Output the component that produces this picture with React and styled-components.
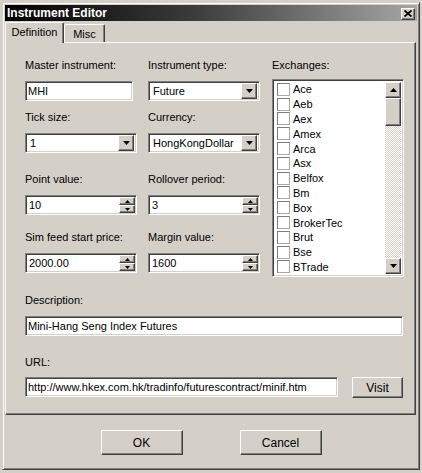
import React from 'react';
import styled, { createGlobalStyle, css } from 'styled-components';

const GlobalStyle = createGlobalStyle`
html, body {
  margin: 0;
  padding: 0;
  background: #d4d0c8;
}
body {
  font-family: "Liberation Sans", Arial, sans-serif;
  font-size: 11px;
  color: #000;
}
* { box-sizing: border-box; }
`;

const sunken = css`
border: 1px solid;
border-color: #808080 #ffffff #ffffff #808080;
box-shadow: inset 1px 1px 0 #404040, inset -1px -1px 0 #d4d0c8;
`;

const raised = css`
border: 1px solid;
border-color: #ffffff #404040 #404040 #ffffff;
box-shadow: inset -1px -1px 0 #808080;
background: #d4d0c8;
`;

const Desktop = styled.div`
width: 422px;
height: 473px;
padding: 2px 0 0 2px;
overflow: hidden;
`;

const Window = styled.div`
width: 418px;
height: 468px;
display: flex;
flex-direction: column;
padding: 2px;
background: #d4d0c8;
border: 1px solid;
border-color: #d4d0c8 #404040 #404040 #d4d0c8;
box-shadow: inset 1px 1px 0 #ffffff, inset -1px -1px 0 #808080;
`;

const TitleBar = styled.div`
height: 16px;
display: flex;
align-items: center;
justify-content: space-between;
padding: 0 2px;
background: linear-gradient(90deg, #000000 0%, #3a3a3a 45%, #a6a6a6 100%);
`;

const Title = styled.span`
color: #fff;
font-weight: bold;
font-size: 12px;
line-height: 16px;
`;

const CloseButton = styled.div`
${raised};
width: 14px;
height: 12px;
display: flex;
align-items: center;
justify-content: center;
margin-top: 1px;
`;

const Tabs = styled.div`
display: flex;
align-items: flex-end;
height: 20px;
margin-top: 1px;
position: relative;
z-index: 1;
`;

const Tab = styled.div`
width: ${({$w}) => $w}px;
height: ${({$active}) => ($active ? '21px' : '18px')};
margin-bottom: ${({$active}) => ($active ? '-1px' : '0')};
display: flex;
align-items: center;
justify-content: center;
padding-bottom: ${({$active}) => ($active ? '2px' : '0')};
background: #d4d0c8;
border: 1px solid;
border-bottom: none;
border-color: #ffffff #404040 transparent #ffffff;
box-shadow: inset -1px 0 0 #808080;
border-radius: 2px 2px 0 0;
`;

const Panel = styled.div`
height: 373px;
margin-right: 1px;
padding: 15px 11px 0 19px;
border: 1px solid;
border-color: #ffffff #404040 #404040 #ffffff;
box-shadow: inset -1px -1px 0 #808080;
`;

const Upper = styled.div`
display: flex;
align-items: flex-start;
`;

const FieldGrid = styled.div`
display: grid;
grid-template-columns: 112px 112px;
column-gap: 11px;
`;

const Field = styled.div`
display: flex;
flex-direction: column;
margin-top: ${({$mt}) => $mt || 0}px;
`;

const Label = styled.label`
height: 14px;
line-height: 14px;
margin-bottom: ${({$mb}) => ($mb === undefined ? 9 : $mb)}px;
white-space: nowrap;
`;

const TextInput = styled.input`
${sunken};
width: ${({$w}) => ($w ? `${$w}px` : '100%')};
height: 20px;
padding: 0 2px;
background: #fff;
font-family: inherit;
font-size: 11px;
color: #000;
outline: none;
`;

const Combo = styled.div`
${sunken};
height: 20px;
display: flex;
align-items: center;
justify-content: space-between;
padding: 2px 2px 2px 4px;
background: #fff;
`;

const ComboValue = styled.span`
white-space: nowrap;
overflow: hidden;
`;

const ArrowButton = styled.div`
${raised};
flex: none;
width: 16px;
height: 16px;
display: flex;
align-items: center;
justify-content: center;
`;

const Spinner = styled.div`
${sunken};
height: 20px;
display: flex;
align-items: center;
justify-content: space-between;
padding: 2px 1px 2px 3px;
background: #fff;
`;

const SpinButtons = styled.div`
display: flex;
flex-direction: column;
width: 16px;
height: 16px;
`;

const SpinHalf = styled.div`
${raised};
height: 8px;
display: flex;
align-items: center;
justify-content: center;
`;

const ExchangeColumn = styled.div`
width: 132px;
margin-left: 12px;
display: flex;
flex-direction: column;
`;

const ListBox = styled.div`
${sunken};
height: 198px;
display: flex;
padding: 2px;
background: #fff;
`;

const List = styled.div`
flex: 1;
overflow: hidden;
`;

const ListItem = styled.div`
height: 14.8px;
display: flex;
align-items: center;
padding-left: 2px;
gap: 3px;
line-height: 14px;
`;

const CheckBox = styled.span`
width: 13px;
height: 13px;
flex: none;
border: 1px solid;
border-color: #7c7c7c #a8a8a8 #a8a8a8 #7c7c7c;
background: #fff;
`;

const ScrollBar = styled.div`
width: 16px;
display: flex;
flex-direction: column;
`;

const Thumb = styled.div`
${raised};
height: 28px;
`;

const Track = styled.div`
flex: 1;
background: repeating-conic-gradient(#ffffff 0 25%, #d4d0c8 0 50%) 0 0 / 2px 2px;
`;

const WideField = styled.div`
display: flex;
flex-direction: column;
margin-top: ${({$mt}) => $mt}px;
width: 378px;
`;

const UrlRow = styled.div`
display: flex;
justify-content: space-between;
`;

const Button = styled.button`
${raised};
width: ${({$w}) => $w}px;
height: ${({$h}) => $h}px;
padding: 0;
font-family: inherit;
font-size: ${({$fs}) => $fs || 11}px;
color: #000;
`;

const Footer = styled.div`
display: flex;
justify-content: center;
gap: 57px;
padding-top: 15px;
`;

const Down = ({w = 7, h = 4}) => (
    <svg width={w} height={h} viewBox={`0 0 ${w} ${h}`}>
        <polygon points={`0,0 ${w},0 ${w / 2},${h}`} fill="#000" />
    </svg>
);

const Up = ({w = 7, h = 4}) => (
    <svg width={w} height={h} viewBox={`0 0 ${w} ${h}`}>
        <polygon points={`0,${h} ${w},${h} ${w / 2},0`} fill="#000" />
    </svg>
);

const Select = ({value}) => (
    <Combo>
        <ComboValue>{value}</ComboValue>
        <ArrowButton><Down /></ArrowButton>
    </Combo>
);

const Spin = ({value}) => (
    <Spinner>
        <span>{value}</span>
        <SpinButtons>
            <SpinHalf><Up w={5} h={3} /></SpinHalf>
            <SpinHalf><Down w={5} h={3} /></SpinHalf>
        </SpinButtons>
    </Spinner>
);

const exchanges = ['Ace', 'Aeb', 'Aex', 'Amex', 'Arca', 'Asx', 'Belfox', 'Bm', 'Box',
    'BrokerTec', 'Brut', 'Bse', 'BTrade'];

export default function App() {
    return (
        <Desktop>
            <GlobalStyle />
            <Window>
                <TitleBar>
                    <Title>Instrument Editor</Title>
                    <CloseButton>
                        <svg width="8" height="7" viewBox="0 0 8 7">
                            <path d="M0.5 0.5 L7.5 6.5 M7.5 0.5 L0.5 6.5" stroke="#000" strokeWidth="1.8" />
                        </svg>
                    </CloseButton>
                </TitleBar>

                <Tabs>
                    <Tab $active $w={59}>Definition</Tab>
                    <Tab $w={41}>Misc</Tab>
                </Tabs>

                <Panel>
                    <Upper>
                        <FieldGrid>
                            <Field>
                                <Label>Master instrument:</Label>
                                <TextInput $w={108} defaultValue="MHI" />
                            </Field>
                            <Field>
                                <Label>Instrument type:</Label>
                                <Select value="Future" />
                            </Field>

                            <Field $mt={9}>
                                <Label>Tick size:</Label>
                                <Select value="1" />
                            </Field>
                            <Field $mt={9}>
                                <Label>Currency:</Label>
                                <Select value="HongKongDollar" />
                            </Field>

                            <Field $mt={19}>
                                <Label>Point value:</Label>
                                <Spin value="10" />
                            </Field>
                            <Field $mt={19}>
                                <Label>Rollover period:</Label>
                                <Spin value="3" />
                            </Field>

                            <Field $mt={15}>
                                <Label>Sim feed start price:</Label>
                                <Spin value="2000.00" />
                            </Field>
                            <Field $mt={15}>
                                <Label>Margin value:</Label>
                                <Spin value="1600" />
                            </Field>
                        </FieldGrid>

                        <ExchangeColumn>
                            <Label $mb={7}>Exchanges:</Label>
                            <ListBox>
                                <List>
                                    {exchanges.map(name => (
                                        <ListItem key={name}>
                                            <CheckBox />
                                            <span>{name}</span>
                                        </ListItem>
                                    ))}
                                </List>
                                <ScrollBar>
                                    <ArrowButton><Up /></ArrowButton>
                                    <Thumb />
                                    <Track />
                                    <ArrowButton><Down /></ArrowButton>
                                </ScrollBar>
                            </ListBox>
                        </ExchangeColumn>
                    </Upper>

                    <WideField $mt={16}>
                        <Label>Description:</Label>
                        <TextInput defaultValue="Mini-Hang Seng Index Futures" />
                    </WideField>

                    <WideField $mt={19}>
                        <Label $mb={8}>URL:</Label>
                        <UrlRow>
                            <TextInput $w={313} defaultValue="http://www.hkex.com.hk/tradinfo/futurescontract/minif.htm" />
                            <Button $w={51} $h={21} $fs={12}>Visit</Button>
                        </UrlRow>
                    </WideField>
                </Panel>

                <Footer>
                    <Button $w={82} $h={25} $fs={12}>OK</Button>
                    <Button $w={82} $h={25} $fs={12}>Cancel</Button>
                </Footer>
            </Window>
        </Desktop>
    );
}
